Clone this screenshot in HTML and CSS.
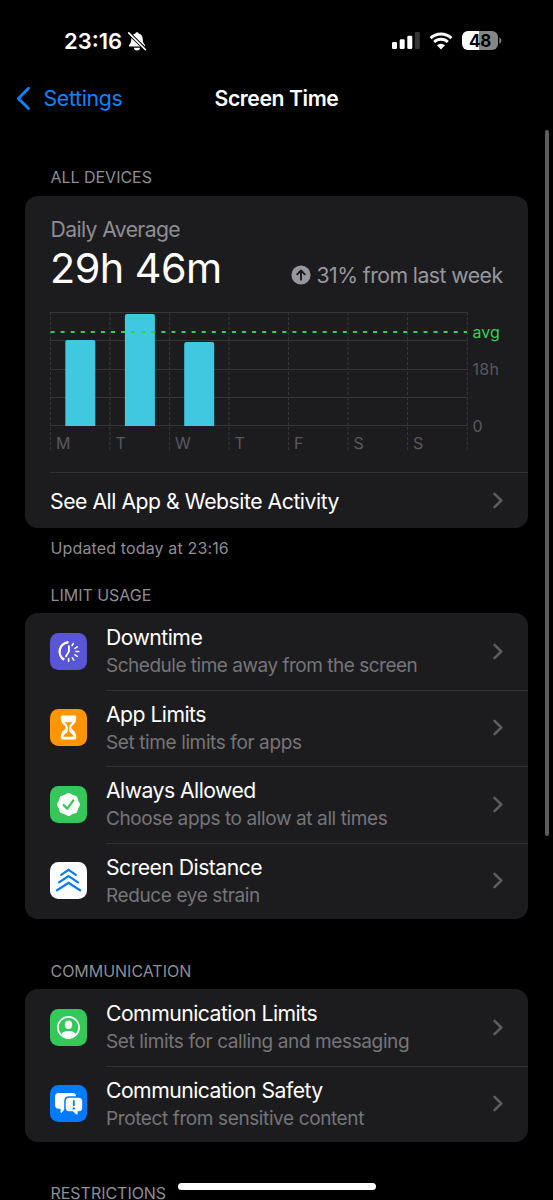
FILE: index.html
```
<!DOCTYPE html>
<html lang="en">
<head>
<meta charset="utf-8">
<title>Screen Time</title>
<link rel="stylesheet" href="styles.css">
</head>
<body>
<svg class="defs" width="0" height="0" aria-hidden="true">
  <symbol id="chevron" viewBox="0 0 10 17"><path d="M1.500 1.800 8.300 8.500 1.500 15.200" fill="none" stroke="currentColor" stroke-width="2.500" stroke-linecap="round" stroke-linejoin="round"/></symbol>
</svg>
<div class="phone">
  <header class="status">
    <span class="time">23:16</span>
    <svg class="bell" width="20" height="20" viewBox="0 0 20 20">
      <path d="M10 1.200c-.9 0-1.500.6-1.700 1.300C5.600 3.200 4.400 5.300 4.300 8c-.1 3.200-.8 4.400-2.100 5.700-.7.800-.3 1.800.8 1.800h14c1.100 0 1.500-1 .8-1.800-1.300-1.300-2-2.500-2.100-5.700-.1-2.700-1.300-4.800-4-5.500C11.500 1.800 10.900 1.200 10 1.200z" fill="#fff"/>
      <path d="M7 16.700h6a3 2.700 0 0 1-6 0z" fill="#fff"/>
      <path d="M1.500 1.700 18.600 18.500" stroke="#000" stroke-width="3.600"/>
      <path d="M1.700 1.900 18.400 18.600" stroke="#fff" stroke-width="1.600" stroke-linecap="round"/>
    </svg>
    <span class="spacer"></span>
    <svg class="signal" width="28" height="18" viewBox="0 0 28 18">
      <rect x="0" y="10" width="5" height="7" rx="1.300" fill="#fff"/>
      <rect x="7.700" y="7.300" width="5" height="9.700" rx="1.300" fill="#fff"/>
      <rect x="15.300" y="3.800" width="5" height="13.200" rx="1.300" fill="#fff"/>
      <rect x="22.800" y="0" width="5" height="17" rx="1.300" fill="#363636"/>
    </svg>
    <svg class="wifi" width="24" height="18" viewBox="0 0 24 18">
      <path d="M1.600 6.100a15 15 0 0 1 20.800 0M5.200 10a9.800 9.800 0 0 1 13.600 0" fill="none" stroke="#fff" stroke-width="3"/>
      <path d="M12 17.400 7.900 13.300a5.900 5.900 0 0 1 8.200 0z" fill="#fff"/>
    </svg>
    <div class="battery"><span>48</span></div>
    <svg class="nub" width="3" height="7" viewBox="0 0 3 7"><path d="M.3.400C3 1.300 3 5.700.3 6.600z" fill="#868686"/></svg>
  </header>

  <nav class="nav">
    <a class="back"><svg width="15" height="25" viewBox="0 0 15 25"><path d="M12.500 2.200 2.400 12.400 12.500 22.600" fill="none" stroke="currentColor" stroke-width="2.800" stroke-linecap="round" stroke-linejoin="round"/></svg><span>Settings</span></a>
    <h1>Screen Time</h1>
  </nav>

  <main>
    <h2 class="h-devices">ALL DEVICES</h2>
    <section class="card usage">
      <div class="label">Daily Average</div>
      <div class="summary">
        <span class="total">29h 46m</span>
        <span class="change">
          <svg width="20" height="20" viewBox="0 0 20 20"><circle cx="10" cy="10" r="9.600" fill="#98979e"/><path d="M10 14.700V5.800M6.200 9.300 10 5.500l3.800 3.800" fill="none" stroke="#1c1c1e" stroke-width="1.900" stroke-linecap="round" stroke-linejoin="round"/></svg>
          <span>31% from last week</span>
        </span>
      </div>
      <svg class="chart" width="478" height="146" viewBox="50 310 478 146">
        <g stroke="#363638" stroke-width="1">
          <path d="M50 312.500H467.500M50 340.500H467.500M50 369.500H467.500M50 397.500H467.500M50 425.500H467.500"/>
          <path stroke-dasharray="3 2" d="M50.500 312V452M110 312V452M169.500 312V452M229 312V452M288.500 312V452M348 312V452M407.500 312V452M467.300 312V452"/>
        </g>
        <g fill="#40c8e0">
          <path d="M65.300 426V342q0-2 2-2H93.300q2 0 2 2V426z"/>
          <path d="M124.900 426V316q0-2 2-2H152.900q2 0 2 2V426z"/>
          <path d="M184.200 426V344q0-2 2-2H212.200q2 0 2 2V426z"/>
        </g>
        <path d="M50.500 332H467" stroke="#30d158" stroke-width="2" stroke-dasharray="4 6.080"/>
        <g class="axis">
          <text x="56" y="449">M</text><text x="115.500" y="449">T</text><text x="175" y="449">W</text><text x="234.500" y="449">T</text><text x="294" y="449">F</text><text x="353.500" y="449">S</text><text x="413" y="449">S</text>
          <text class="avg" x="472.500" y="338">avg</text><text class="hours" x="472.500" y="375">18h</text><text x="472.500" y="431.500">0</text>
        </g>
      </svg>
      <div class="all"><span>See All App &amp; Website Activity</span><svg class="chev"><use href="#chevron"/></svg></div>
    </section>
    <p class="updated">Updated today at 23:16</p>

    <h2 class="h-limit">LIMIT USAGE</h2>
    <section class="card list">
      <div class="row">
        <svg class="icon" viewBox="0 0 37 37"><rect width="37" height="37" rx="8.500" fill="#5856d6"/>
          <path d="M18.500 9.300a9.300 9.300 0 0 0-4.300 17.300" fill="none" stroke="#fff" stroke-width="2.400"/>
          <path d="M18.900 13.300V18.500L16 23.300" fill="none" stroke="#fff" stroke-width="1.900" stroke-linecap="round" stroke-linejoin="round"/>
          <path d="M22 12.600 23.300 10.500M24.800 15.300 27.300 13.800M25.800 18.600H28.800M24.900 21.900 27.300 23.300M22.300 24.800 23.800 27.100M18.600 25.600V28.500" stroke="#fff" stroke-width="1.500" stroke-linecap="round"/></svg>
        <div class="text"><b>Downtime</b><i class="long">Schedule time away from the screen</i></div><svg class="chev"><use href="#chevron"/></svg>
      </div>
      <div class="row">
        <svg class="icon" viewBox="0 0 37 37"><rect width="37" height="37" rx="8.500" fill="#ff9500"/>
          <path d="M12.300 6.500H24.700Q26.300 6.500 26.300 8.200C26.300 13 24.600 14.500 22.600 16.300 20.800 17.900 20.800 19.100 22.600 20.700 24.600 22.500 26.300 24 26.300 28.800Q26.300 30.500 24.700 30.500H12.300Q10.700 30.500 10.700 28.800C10.700 24 12.400 22.500 14.400 20.700 16.200 19.100 16.200 17.900 14.400 16.300 12.400 14.500 10.700 13 10.700 8.200Q10.700 6.500 12.300 6.500z" fill="#fff"/>
          <path d="M14.600 13.300H22.400C21.600 14.400 19.200 16 19.200 18.200V22C19.300 24 23.500 24.900 23.600 27.800H13.400C13.500 24.900 17.700 24 17.800 22V18.200C17.800 16 15.400 14.400 14.600 13.300z" fill="#ff9500"/></svg>
        <div class="text"><b>App Limits</b><i>Set time limits for apps</i></div><svg class="chev"><use href="#chevron"/></svg>
      </div>
      <div class="row">
        <svg class="icon" viewBox="0 0 37 37"><rect width="37" height="37" rx="8.500" fill="#34c759"/>
          <path d="M18.500 8.700 21.800 10.500 25.400 11.600 26.500 15.200 28.300 18.500 26.500 21.800 25.400 25.400 21.800 26.500 18.500 28.300 15.200 26.500 11.600 25.400 10.500 21.800 8.700 18.500 10.500 15.200 11.600 11.600 15.200 10.500z" fill="#fff" stroke="#fff" stroke-width="3.600" stroke-linejoin="round"/>
          <path d="M13.600 19 17.200 22.800 23.300 14.300" fill="none" stroke="#34c759" stroke-width="2.200" stroke-linecap="round" stroke-linejoin="round"/></svg>
        <div class="text"><b>Always Allowed</b><i>Choose apps to allow at all times</i></div><svg class="chev"><use href="#chevron"/></svg>
      </div>
      <div class="row">
        <svg class="icon" viewBox="0 0 37 37"><rect width="37" height="37" rx="8.500" fill="#fff"/>
          <path d="M11.200 12.800 18.500 7.900 25.800 12.800M9 20.300 18.500 14.100 28 20.300M7 28.300 18.500 20.900 30 28.300" fill="none" stroke="#0a7aff" stroke-width="2.200" stroke-linecap="round" stroke-linejoin="miter"/></svg>
        <div class="text"><b>Screen Distance</b><i>Reduce eye strain</i></div><svg class="chev"><use href="#chevron"/></svg>
      </div>
    </section>

    <h2 class="h-comm">COMMUNICATION</h2>
    <section class="card list">
      <div class="row">
        <svg class="icon" viewBox="0 0 37 37"><rect width="37" height="37" rx="8.500" fill="#34c759"/>
          <circle cx="18.500" cy="18.500" r="10.600" fill="none" stroke="#fff" stroke-width="1.700"/>
          <ellipse cx="18.500" cy="15.800" rx="3.700" ry="4.200" fill="#fff"/><path d="M11.200 25.700C12.500 20.700 24.500 20.700 25.800 25.700 21.800 29.600 15.200 29.600 11.200 25.700z" fill="#fff"/></svg>
        <div class="text"><b>Communication Limits</b><i>Set limits for calling and messaging</i></div><svg class="chev"><use href="#chevron"/></svg>
      </div>
      <div class="row">
        <svg class="icon" viewBox="0 0 37 37"><rect width="37" height="37" rx="8.500" fill="#007aff"/>
          <path d="M8.500 8H22.500Q26 8 26 11.500V20Q26 23.700 22.500 23.700H15L11.600 27.700Q10.600 28.500 10.600 27V23.700H8.500Q5 23.700 5 20V11.500Q5 8 8.500 8z" fill="#fff"/>
          <path d="M19.200 12.800H28.700Q32.200 12.800 32.200 16.300V22.700Q32.200 26.200 28.700 26.200H27.600V28.700Q27.400 30.200 26.200 29.200L22.700 26.200H19.200Q15.700 26.200 15.700 22.700V16.300Q15.700 12.800 19.200 12.800z" fill="#fff" stroke="#007aff" stroke-width="3" paint-order="stroke"/>
          <path d="M23.800 16V20.200" stroke="#007aff" stroke-width="1.800" stroke-linecap="round"/><circle cx="23.800" cy="23.400" r="1.200" fill="#007aff"/></svg>
        <div class="text"><b>Communication Safety</b><i>Protect from sensitive content</i></div><svg class="chev"><use href="#chevron"/></svg>
      </div>
    </section>
    <h2 class="h-rest">RESTRICTIONS</h2>
  </main>
  <div class="scrollbar"></div>
  <div class="home"></div>
</div>
</body>
</html>
```
FILE: styles.css
```
* { box-sizing: border-box; }
body { margin: 0; background: #000; }
.defs { position: absolute; }
.phone {
  position: relative; width: 553px; height: 1200px; overflow: hidden;
  background: #000; color: #fff;
  font-family: Inter, "Liberation Sans", sans-serif; font-size: 21.200px;
}
svg { display: block; flex: none; }
.status { display: flex; align-items: center; height: 68px; padding: 14px 51px 0 64px; }
.time { font-size: 22px; font-weight: 600; letter-spacing: 0; line-height: 26px; }
.bell { margin-left: 5px; }
.spacer { flex: 1; }
.signal { margin-top: -1px; }
.wifi { margin-left: 9px; margin-top: -1px; }
.battery {
  width: 36px; height: 19px; margin-left: 9px; margin-top: -1px; border-radius: 6px;
  background: linear-gradient(90deg, #fff 48%, #868686 48%);
  color: #000; font-size: 17px; font-weight: 700; line-height: 20px; letter-spacing: -0.200px; text-align: center;
}
.nub { margin-left: 1px; margin-top: -1px; }
.nav { position: relative; display: flex; align-items: center; justify-content: center; height: 61px; padding-bottom: 1px; }
.nav h1 { margin: 0; font-size: 21.200px; font-weight: 600; letter-spacing: -0.420px; }
.back { position: absolute; left: 16px; display: flex; align-items: center; gap: 12.500px; color: #0a84ff; letter-spacing: -0.270px; }
main { padding: 0 25px; }
h2 { margin: 0; padding-left: 25.500px; font-size: 16px; font-weight: 400; line-height: 20px; color: #8d8d93; letter-spacing: -0.030px; }
.h-devices { padding-top: 38px; margin-bottom: 8.500px; }
.card { background: #1c1c1e; border-radius: 13px; overflow: hidden; width: 503px; }
.usage { height: 332.500px; padding: 20px 0 0 25px; }
.label { color: #8d8d93; line-height: 26px; padding-left: 0.500px; letter-spacing: -0.620px; }
.summary { display: flex; justify-content: space-between; align-items: flex-start; height: 68.500px; padding-right: 25.500px; }
.total { font-size: 41.300px; line-height: 52px; letter-spacing: -0.500px; }
.change { display: flex; align-items: center; gap: 5px; padding-top: 20px; line-height: 26px; color: #98979e; letter-spacing: -0.530px; }
.axis { font-size: 16px; fill: #59595d; }
.axis .avg { fill: #30d158; }
.axis .hours { letter-spacing: 0.300px; }
.all { display: flex; align-items: center; justify-content: space-between; margin-top: 16px; height: 56px; border-top: 1px solid #303033; padding-right: 25px; letter-spacing: -0.460px; }
.chev { width: 10px; height: 17px; color: #5b5b60; }
.updated { margin: 9.500px 0 0 25.500px; font-size: 16px; line-height: 20px; color: #8d8d93; letter-spacing: 0.140px; }
.h-limit { margin-top: 27.500px; margin-bottom: 8px; }
.row { display: flex; align-items: center; height: 76.500px; padding: 0 25px; }
.row + .row { background: linear-gradient(#303033, #303033) 81px 0 / 100% 1px no-repeat; }
.icon { width: 37px; height: 37px; }
.text { flex: 1; height: 76.500px; margin-left: 19px; padding-top: 11.200px; }
.row b, .row i { display: block; font-weight: 400; font-style: normal; white-space: nowrap; }
.row b { line-height: 27px; letter-spacing: -0.530px; }
.row i { font-size: 19px; line-height: 29px; color: #757579; letter-spacing: -0.390px; }
.row i.long { letter-spacing: -0.490px; }
.h-comm { margin-top: 41.500px; margin-bottom: 8.500px; }
.h-rest { margin-top: 41px; }
.scrollbar { position: absolute; left: 545px; top: 130px; width: 4px; height: 706px; border-radius: 2px; background: #5c5c5c; }
.home { position: absolute; left: 178px; top: 1183px; width: 198px; height: 7px; border-radius: 4px; background: #fff; }
```
